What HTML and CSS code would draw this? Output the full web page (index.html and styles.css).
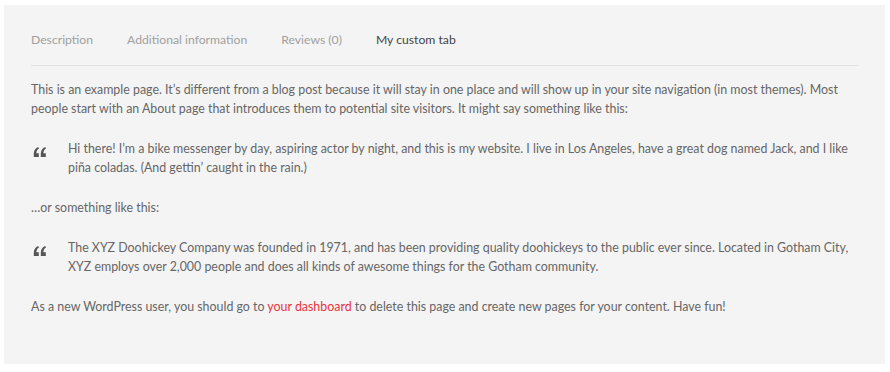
FILE: index.html
```html
<!DOCTYPE html>
<html lang="en">

<head>
    <meta charset="UTF-8">
    <meta name="viewport" content="width=device-width, initial-scale=1.0">
    <title>My custom tab</title>
    <link rel="stylesheet" href="styles.css">
</head>

<body>
    <div class="panel">
        <ul class="tabs">
            <li>Description</li>
            <li>Additional information</li>
            <li>Reviews (0)</li>
            <li class="active">My custom tab</li>
        </ul>

        <div class="content">
            <p>This is an example page. It&rsquo;s different from a blog post because it will stay in one place and will show up in your site navigation (in most themes). Most people start with an About page that introduces them to potential site visitors. It might say something like this:</p>

            <blockquote>
                <svg class="quote-icon" viewBox="0 0 14 10" width="14" height="10">
                    <path d="M2.2 10h3.6V6.2H3.4C3.4 4.2 4.3 2.6 6 1.6L5.2 0C2.6 1.2 0.8 3.4 0.8 6.6V10z" />
                    <path d="M9.2 10h3.6V6.2h-2.4c0-2 0.9-3.6 2.6-4.6L12.2 0C9.6 1.2 7.8 3.4 7.8 6.6V10z" />
                </svg>
                <p>Hi there! I&rsquo;m a bike messenger by day, aspiring actor by night, and this is my website. I live in Los Angeles, have a great dog named Jack, and I like pi&ntilde;a coladas. (And gettin&rsquo; caught in the rain.)</p>
            </blockquote>

            <p>&hellip;or something like this:</p>

            <blockquote>
                <svg class="quote-icon" viewBox="0 0 14 10" width="14" height="10">
                    <path d="M2.2 10h3.6V6.2H3.4C3.4 4.2 4.3 2.6 6 1.6L5.2 0C2.6 1.2 0.8 3.4 0.8 6.6V10z" />
                    <path d="M9.2 10h3.6V6.2h-2.4c0-2 0.9-3.6 2.6-4.6L12.2 0C9.6 1.2 7.8 3.4 7.8 6.6V10z" />
                </svg>
                <p>The XYZ Doohickey Company was founded in 1971, and has been providing quality doohickeys to the public ever since. Located in Gotham City, XYZ employs over 2,000 people and does all kinds of awesome things for the Gotham community.</p>
            </blockquote>

            <p class="last">As a new WordPress user, you should go to <a href="#">your dashboard</a> to delete this page and create new pages for your content. Have fun!</p>
        </div>
    </div>
</body>

</html>
```

FILE: styles.css
```css
body {
    margin: 0;
    padding: 5px 5px 8px 4px;
    background: #fff;
    font-family: Lato, "Open Sans", sans-serif;
    font-size: 12.4px;
    color: #666;
}

.panel {
    background: #f4f4f4;
    padding: 21px 27px 48px 27px;
}

.tabs {
    list-style: none;
    margin: 0;
    padding: 0 0 11px 0;
    display: flex;
    gap: 34px;
    border-bottom: 1px solid #e2e2e2;
}

.tabs li {
    color: #a0a0a0;
    font-size: 12.2px;
    line-height: 28px;
}

.tabs li.active {
    color: #444;
}

.content {
    padding-top: 14px;
}

.content p {
    margin: 0 0 21px 0;
    line-height: 19px;
}

.content p.last {
    margin-bottom: 0;
}

blockquote {
    display: flex;
    margin: 0 0 21px 0;
    padding: 0 0 0 2px;
}

blockquote p {
    flex: 1;
    margin: 0 !important;
}

.quote-icon {
    fill: #555;
    flex-shrink: 0;
    margin: 8px 21px 0 0;
}

a {
    color: #e8333f;
    text-decoration: none;
}
```
